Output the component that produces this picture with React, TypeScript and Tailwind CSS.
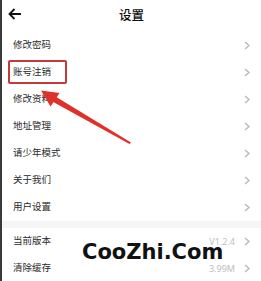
import React from "react";

const rows = ["修改密码", "账号注销", "修改资料", "地址管理", "请少年模式", "关于我们", "用户设置"];

function Chevron() {
  return (
    <svg width="6" height="9" viewBox="0 0 6 9" className="shrink-0">
      <path d="M1 1 L5 4.5 L1 8" fill="none" stroke="#b5b5b5" strokeWidth="1.3" />
    </svg>
  );
}

function Row({ label, value }: { label: string; value?: string }) {
  return (
    <div className="flex h-[27px] items-center pl-[11px] pr-[11px]">
      <span className="flex-1 text-[9.5px] text-[#2a2a2a]">{label}</span>
      {value && <span className="mr-[9px] text-[9px] text-[#bdbdbd]">{value}</span>}
      <Chevron />
    </div>
  );
}

export default function App() {
  return (
    <div
      className="relative h-[281px] w-[261px] overflow-hidden bg-white border-l-2 border-[#3a3a3a]"
      style={{ fontFamily: '"Noto Sans", "Noto Sans CJK SC", sans-serif' }}
    >
      <div className="relative flex h-[32px] items-center justify-center">
        <svg width="14" height="12" viewBox="0 0 14 12" className="absolute left-[6px] top-[8px]">
          <path d="M13 6 H1.5 M6.5 1 L1.5 6 L6.5 11" fill="none" stroke="#111" strokeWidth="1.8" />
        </svg>
        <span className="text-[12.5px] font-medium text-[#111]">设置</span>
      </div>
      <div>
        {rows.map((r) => (
          <Row key={r} label={r} />
        ))}
      </div>
      <div className="h-[7px] bg-[#f6f6f6]" />
      <Row label="当前版本" value="V1.2.4" />
      <Row label="清除缓存" value="3.99M" />

      {/* annotation box */}
      <div className="absolute left-[6px] top-[60px] h-[24px] w-[59px] rounded-[2px] border-2 border-[#c23a3c]" />
      {/* arrow */}
      <svg className="absolute left-[-2px] top-0" width="261" height="281" viewBox="0 0 261 281">
        <path d="M129.5 144 L131 142.5 L53 95 L50.5 100.5 Z" fill="#e0302a" />
        <path d="M41 90.5 L50.5 106.5 L59.5 93 Z" fill="#e0302a" />
      </svg>
      {/* watermark */}
      <div
        className="absolute left-[80px] top-[242px] text-[21px] font-bold leading-[21px] text-[#111]"
        style={{ fontFamily: '"DejaVu Sans", sans-serif' }}
      >
        CooZhi.Com
      </div>
    </div>
  );
}
